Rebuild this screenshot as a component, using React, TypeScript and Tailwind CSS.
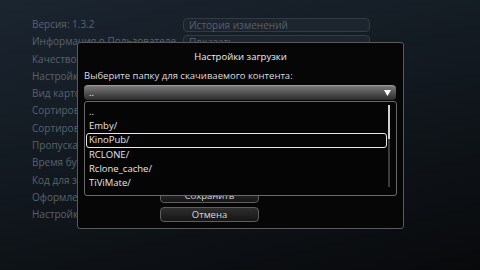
import { useState } from 'react';

const settings = [
  'Версия: 1.3.2',
  'Информация о Пользователе',
  'Качество видео',
  'Настройки загрузки',
  'Вид карточек',
  'Сортировка сериалов',
  'Сортировка фильмов',
  'Пропускать заставки',
  'Время буферизации',
  'Код для загрузки',
  'Оформление',
  'Настройки плеера',
];

const folders = ['..', 'Emby/', 'KinoPub/', 'RCLONE/', 'Rclone_cache/', 'TiViMate/'];

function DialogButton({ label }: { label: string }) {
  return (
    <button
      type="button"
      className="h-[15px] w-[99px] rounded-[4px] border border-[#5e5e5e] bg-gradient-to-b from-[#2e2e2e] to-[#161616] text-[9.5px] leading-none text-[#d8d8d8]"
    >
      {label}
    </button>
  );
}

export default function App() {
  const [active] = useState('KinoPub/');

  return (
    <div
      className="relative h-[270px] w-[480px] overflow-hidden bg-[linear-gradient(165deg,#1b2530_0%,#121920_45%,#08090b_100%)]"
      style={{ fontFamily: '"Open Sans", "Noto Sans", sans-serif' }}
    >
      {/* settings page behind the dialog */}
      <div className="flex pt-[16px] pl-[32px]">
        <ul className="w-[151px] text-[10px] text-[#58626d]">
          {settings.map((s) => (
            <li key={s} className="h-[17.3px] whitespace-nowrap leading-[17.3px]">
              {s}
            </li>
          ))}
        </ul>
        <div className="flex w-[187px] flex-col gap-[3.3px] pt-[2px]">
          <div className="h-[14px] rounded-[4px] border border-[#323b45] bg-[#1c242d] px-[5px] text-[10px] leading-[12px] text-[#56606b]">
            История изменений
          </div>
          <div className="h-[14px] rounded-[4px] border border-[#323b45] bg-[#1c242d] px-[5px] text-[10px] leading-[12px] text-[#56606b]">
            Показать
          </div>
        </div>
      </div>

      {/* download settings dialog */}
      <div className="absolute left-[77px] top-[42px] h-[187px] w-[327px] rounded-[3px] border border-[#5a5a5a] bg-[#060607]">
        <div className="pt-[7px] text-center text-[9.5px] leading-[13px] text-[#eeeeee]">
          Настройки загрузки
        </div>
        <div className="mt-[6px] pl-[6px] text-[9.5px] leading-[13px] text-[#dcdcdc]">
          Выберите папку для скачиваемого контента:
        </div>
        <div className="ml-[6px] mt-[3px] flex h-[15px] w-[312px] items-center justify-between rounded-[4px] border-t border-[#9a9a9a] bg-gradient-to-b from-[#7a7a7a] to-[#2c2c2c] pl-[5px] pr-[5px]">
          <span className="text-[9.5px] leading-none text-white">..</span>
          <svg width="7" height="6" viewBox="0 0 7 6">
            <path d="M0 0 H7 L3.5 6 Z" fill="#ffffff" />
          </svg>
        </div>

        <div className="ml-[82px] mt-[88px] flex flex-col gap-[4px]">
          <DialogButton label="Сохранить" />
          <DialogButton label="Отмена" />
        </div>

        {/* open folder list */}
        <div className="absolute left-[6px] top-[58px] flex h-[95px] w-[313px] rounded-[3px] border border-[#6a6a6a] bg-[#050505] pl-[1px] pt-[3px]">
          <ul className="w-[301px]">
            {folders.map((f) => (
              <li
                key={f}
                className={`h-[14.2px] rounded-[3px] border-[1.5px] pl-[2px] text-[9.5px] leading-[12px] text-[#e6e6e6] ${
                  f === active ? 'border-[#e8e8e8]' : 'border-transparent'
                }`}
              >
                {f}
              </li>
            ))}
          </ul>
          <div className="ml-[1px] flex h-[82px] w-[2px] flex-col bg-[#3c3c3c]">
            <div className="h-[34px] w-[2px] bg-[#cfcfcf]" />
          </div>
        </div>
      </div>
    </div>
  );
}
